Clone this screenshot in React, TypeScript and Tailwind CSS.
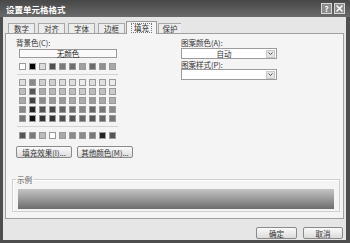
import React from "react";

const font = { fontFamily: '"Noto Sans CJK SC", "Noto Sans", sans-serif' };

const row1 = ["#ffffff", "#000000", "#dcdcdc", "#505050", "#7c7c7c", "#707070", "#a0a0a0", "#6c6c6c", "#909090", "#a8a8a8"];
const grid = [
  ["#dedede", "#8a8a8a", "#cfcfcf", "#d0d0d0", "#dcdcdc", "#dedede", "#ececec", "#dedede", "#e0e0e0", "#ececec"],
  ["#bdbdbd", "#585858", "#ababab", "#b8b8b8", "#bcbcbc", "#bebebe", "#cacaca", "#bcbcbc", "#c0c0c0", "#cccccc"],
  ["#a8a8a8", "#444444", "#8c8c8c", "#989898", "#9a9a9a", "#a8a8a8", "#acacac", "#9a9a9a", "#a8a8a8", "#b0b0b0"],
  ["#888888", "#252525", "#555555", "#474747", "#666666", "#707070", "#888888", "#666666", "#787878", "#8a8a8a"],
  ["#777777", "#111111", "#333333", "#343434", "#4e4e4e", "#555555", "#666666", "#555555", "#666666", "#777777"],
];
const lastRow = ["#555555", "#7a7a7a", "#bcbcbc", "#ffffff", "#a8a8a8", "#8a8a8a", "#8a8a8a", "#777777", "#222222", "#555555"];

function Swatch({ c }: { c: string }) {
  return <div className="w-[7px] h-[7px] border border-[#9a9a9a]" style={{ backgroundColor: c }} />;
}

function SwatchRow({ colors }: { colors: string[] }) {
  return (
    <div className="flex gap-[3px]">
      {colors.map((c, i) => (
        <Swatch key={i} c={c} />
      ))}
    </div>
  );
}

function Select({ value }: { value?: string }) {
  return (
    <div className="flex h-[11px] w-[96px] border border-[#9c9c9c] bg-white items-center">
      <div className="flex-1 text-center text-[7.5px] leading-[9px] text-[#333]">{value}</div>
      <div className="mr-[1px] flex h-[8px] w-[9px] items-center justify-center bg-[#e4e4e4] border border-[#c8c8c8]">
        <svg width="5" height="3" viewBox="0 0 5 3">
          <path d="M0.5 0.5 L2.5 2.5 L4.5 0.5" stroke="#555" strokeWidth="1" fill="none" />
        </svg>
      </div>
    </div>
  );
}

function Btn({ children, w }: { children: React.ReactNode; w: string }) {
  return (
    <div
      className={`${w} h-[12px] flex items-center justify-center border border-[#8a8a8a] rounded-[2px] bg-gradient-to-b from-[#fafafa] to-[#dcdcdc] text-[7.5px] leading-[9px] text-[#333]`}
    >
      {children}
    </div>
  );
}

export default function App() {
  const tabs = ["数字", "对齐", "字体", "边框", "填充", "保护"];
  return (
    <div className="w-[350px] h-[243px] flex flex-col bg-[#4e4e4e] overflow-hidden" style={font}>
      {/* title bar */}
      <div className="h-[17px] flex items-center bg-gradient-to-b from-[#474747] to-[#6a6a6a]">
        <div className="pl-[6px] text-[8.5px] font-bold text-white leading-[10px] flex-1">设置单元格格式</div>
        <div className="flex gap-[2px] mr-[5px]">
          <div className="w-[11px] h-[11px] border border-[#d8d8d8] bg-[#8c8c8c] flex items-center justify-center text-white text-[8px] font-bold leading-none">
            ?
          </div>
          <div className="w-[11px] h-[11px] border border-[#d8d8d8] bg-[#8c8c8c] flex items-center justify-center">
            <svg width="7" height="7" viewBox="0 0 7 7">
              <path d="M0.5 0.5 L6.5 6.5 M6.5 0.5 L0.5 6.5" stroke="#fff" strokeWidth="1.4" />
            </svg>
          </div>
        </div>
      </div>
      {/* body */}
      <div className="flex-1 ml-[3px] mr-[4px] mb-[3px] bg-[#e6e6e6] flex flex-col px-[2px] pt-[4px]">
        {/* tabs */}
        <div className="flex items-end gap-[3px] pl-[3px] h-[12px] relative z-10">
          {tabs.map((t) =>
            t === "填充" ? (
              <div
                key={t}
                className="-mx-[2px] w-[31px] h-[13px] -mb-[1px] border border-b-0 border-[#9a9a9a] bg-[#f4f4f4] flex items-center justify-center text-[7.5px] leading-[9px] text-[#222]"
              >
                <span className="border border-dotted border-[#777] px-[2px] leading-[8px]">{t}</span>
              </div>
            ) : (
              <div
                key={t}
                className={`${t === "保护" ? "w-[23px] border-r-0" : "w-[27px]"} h-[10px] border border-b-0 border-[#a8a8a8] bg-[#ececec] flex items-center justify-center text-[7.5px] leading-[9px] text-[#333]`}
              >
                {t}
              </div>
            )
          )}
        </div>
        {/* panel */}
        <div className="h-[186px] border border-[#a0a0a0] bg-[#f4f4f4] flex flex-col">
          <div className="flex">
            {/* left column */}
            <div className="w-[170px] pl-[10px] flex flex-col">
              <div className="mt-[4px] h-[9px] text-[7.5px] leading-[9px] text-[#333]">背景色(C):</div>
              <div className="ml-[3px] mt-[2px] w-[98px] h-[9px] border border-[#9a9a9a] bg-[#fafafa] flex items-center justify-center text-[7.5px] leading-[8px] text-[#222]">
                无颜色
              </div>
              <div className="ml-[3px] mt-[5px]">
                <SwatchRow colors={row1} />
              </div>
              <div className="ml-[1px] mt-[4px] w-[101px] h-[1px] bg-[#d2d2d2]" />
              <div className="ml-[3px] mt-[4px] flex flex-col gap-[2px]">
                {grid.map((r, i) => (
                  <SwatchRow key={i} colors={r} />
                ))}
              </div>
              <div className="ml-[1px] mt-[4px] w-[101px] h-[1px] bg-[#d2d2d2]" />
              <div className="ml-[3px] mt-[5px]">
                <SwatchRow colors={lastRow} />
              </div>
              <div className="mt-[7px] flex gap-[5px]">
                <Btn w="w-[56px]">填充效果(I)...</Btn>
                <Btn w="w-[56px]">其他颜色(M)...</Btn>
              </div>
            </div>
            {/* right column */}
            <div className="pl-[5px] flex flex-col">
              <div className="mt-[4px] h-[9px] text-[7.5px] leading-[9px] text-[#333]">图案颜色(A):</div>
              <div className="mt-[1px]">
                <Select value="自动" />
              </div>
              <div className="mt-[1px] h-[9px] text-[7.5px] leading-[9px] text-[#333]">图案样式(P):</div>
              <div className="mt-[0px]">
                <Select />
              </div>
            </div>
          </div>
          {/* sample group */}
          <div className="mt-[21px] ml-[6px] mr-[3px] h-[33px] relative border border-[#d0d0d0] shadow-[inset_1px_1px_0_#ffffff] px-[5px] pt-[9px]">
            <div className="absolute -top-[5px] left-[3px] px-[1px] bg-[#f4f4f4] text-[7.5px] leading-[9px] text-[#555]">示例</div>
            <div className="h-[20px] bg-gradient-to-b from-[#c4c4c4] via-[#9a9a9a] to-[#6c6c6c]" />
          </div>
        </div>
        {/* footer */}
        <div className="mt-[8px] flex justify-end gap-[6px] pr-[1px]">
          <Btn w="w-[41px]">确定</Btn>
          <Btn w="w-[40px]">取消</Btn>
        </div>
      </div>
    </div>
  );
}
